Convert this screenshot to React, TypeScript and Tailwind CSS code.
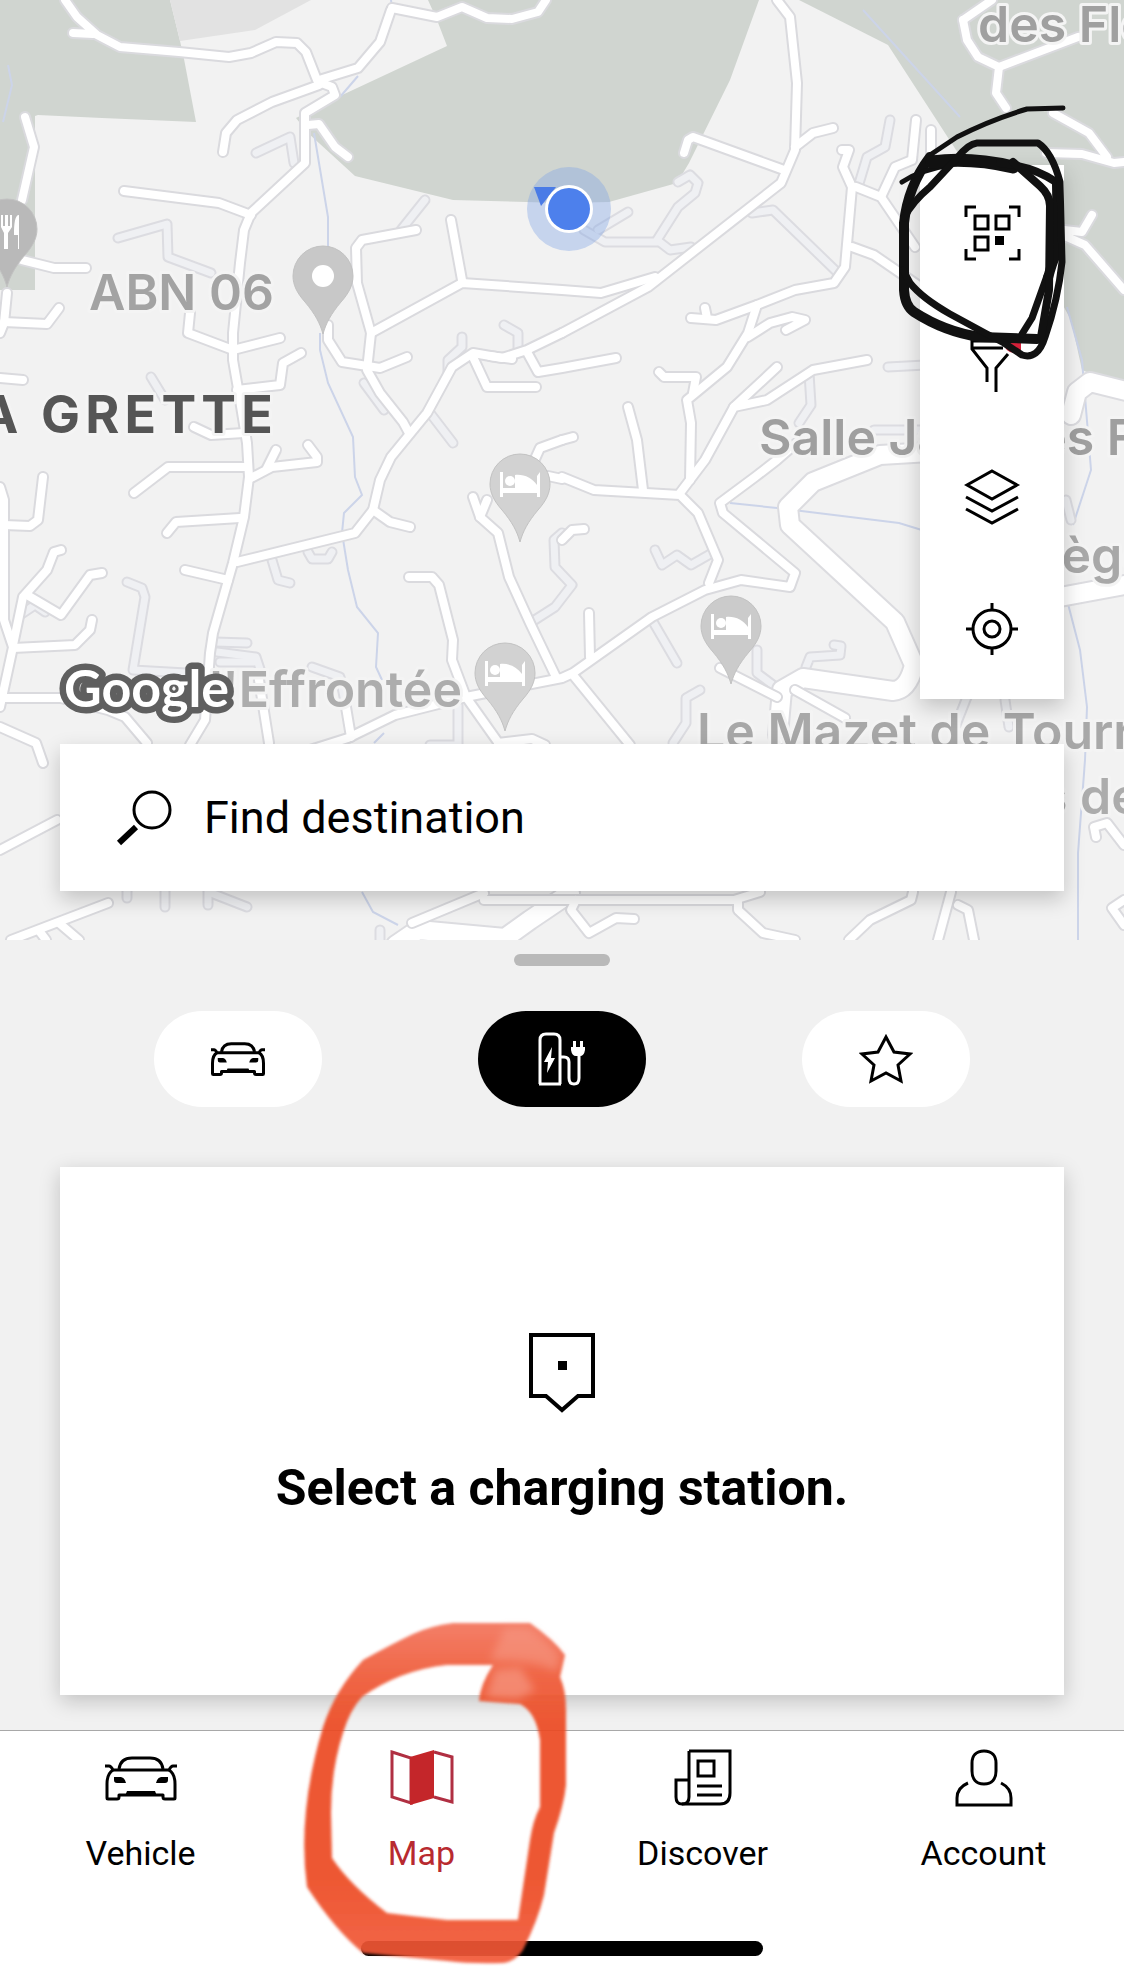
import type { ReactNode } from "react";

type RoadGroup = { width: number; casing: string; fill: string; paths: string[] };

const minorRoads: RoadGroup = {
  width: 7,
  casing: "#dcdce1",
  fill: "#eff0f3",
  paths: [
    "M256 153L290 137L294 163",
    "M118 238L167 224L168 257L211 273",
    "M151 377L165 400",
    "M425 200L401 230",
    "M504 325L518 333V348",
    "M462 337V347L448 360V372",
    "M430 413L453 443",
    "M364 383L384 410",
    "M272 560L278 580L290 583",
    "M308 552L312 559L328 559L332 552",
    "M127 582L142 588L145 597L133 670L186 673",
    "M215 642L247 643",
    "M217 652L256 657L262 675",
    "M220 662H254",
    "M312 667L340 677L346 707",
    "M678 182L690 175L698 183L695 193L678 207L657 240L670 250L691 247",
    "M584 230L605 242L657 242",
    "M598 230L628 212",
    "M752 213L773 210L838 273",
    "M858 187L867 157L885 147L890 120",
    "M809 373L811 405L799 423",
    "M888 367L925 365",
    "M874 430L920 430",
    "M655 550L662 565L677 555L691 565L712 553",
    "M652 620L677 663",
    "M700 690L686 698V723L673 743",
    "M562 533L554 540L555 567L572 585L555 607L530 623",
    "M757 650V673L777 688",
    "M806 667L810 657L840 655L841 646L834 645",
    "M956 725L967 697",
    "M1005 700L1009 727",
    "M127 890V898",
    "M165 890V907",
    "M208 890V905",
    "M211 893L247 907",
    "M380 945V930",
    "M458 705V745H430",
    "M1071 520L1066 500",
    "M20 615L35 605L45 612",
  ],
};

const mainRoads: RoadGroup = {
  width: 8,
  casing: "#dadade",
  fill: "#ffffff",
  paths: [
    "M65 0L77 17L97 35L120 47L179 52L229 57L251 53L276 42L297 43L306 52L317 80",
    "M73 33L93 34",
    "M392 8L437 17L462 7L487 18L512 19L538 12L546 0",
    "M391 10L380 42L358 68L319 80",
    "M319 85L272 102L237 120L226 133L223 152",
    "M319 82L332 87L335 95L305 113V163L251 213L244 230L240 263L233 333V360L240 400L247 443L249 477L244 517L233 563L213 633L210 653L205 720L190 745",
    "M308 125L319 124L335 147L348 157",
    "M124 191L219 203L251 215",
    "M25 117L34 147L22 200",
    "M22 260L54 268H86",
    "M7 293L4 323L0 333",
    "M4 322L47 324L59 308",
    "M190 313L188 333L233 350L280 338",
    "M237 390L280 385L283 363L301 353",
    "M0 378L23 380",
    "M194 427L211 435L244 433",
    "M416 230L362 240L356 248L357 283L371 333L367 370L380 393L403 422L409 433",
    "M371 333L462 283L562 290L601 293L655 277",
    "M451 220L462 280",
    "M328 325V340L342 362L380 368L407 357",
    "M562 333L527 350L502 358L473 353L452 367L427 413L391 457L380 480L373 510L355 533L237 562",
    "M473 357L487 387H536",
    "M490 356L512 359",
    "M527 352L538 372L562 368L616 358",
    "M562 440L540 448L530 470",
    "M548 476L562 479",
    "M134 493L168 467H247",
    "M251 478L272 467L317 462V457L308 445",
    "M267 468L276 450",
    "M0 487L4 500V620L13 647L0 707",
    "M4 525L30 526L38 520L43 477",
    "M13 645L23 597L47 570L54 552L61 550",
    "M27 595L61 615L90 575L102 573",
    "M13 648L75 645L90 630L92 620",
    "M167 533L176 522L240 518",
    "M185 570L228 580",
    "M259 680L269 743",
    "M373 510L390 522L410 527",
    "M409 577H432L439 585L453 640L452 660L466 697L500 745",
    "M473 497L480 517L498 533L509 577L530 623L556 677",
    "M487 500L480 517",
    "M310 750L348 738L395 715L466 697L562 678L573 673L652 617L705 590L741 580L790 587L795 573L723 513L720 503L755 477L777 460L800 440",
    "M346 707L351 737",
    "M0 727L36 743L43 763",
    "M0 850L57 820",
    "M0 698H61L108 710L125 717L147 743",
    "M11 940L108 903",
    "M59 923L79 940",
    "M40 932L46 940",
    "M412 923L484 893",
    "M498 743L532 739L545 745",
    "M562 477L594 490L680 495L698 513L718 560L709 583",
    "M628 407L637 440L643 490",
    "M680 493L705 460L734 407L767 400L813 370L867 360",
    "M734 407L777 367",
    "M690 480L691 423L687 400L727 367L748 333L757 305L795 290L834 283L845 267L852 187L843 167L849 150L842 150",
    "M659 372L664 377L696 377L693 393",
    "M562 440L573 437",
    "M757 305L716 320L691 318",
    "M705 308L707 318",
    "M748 337L770 323L792 317L805 320L786 330",
    "M777 0L790 17L797 83L795 150L781 183L648 287L562 333",
    "M684 153L688 140L693 137L784 170",
    "M795 147L813 133L833 128",
    "M852 247L874 255L906 277L925 290",
    "M856 187L881 197L915 247",
    "M881 197L895 167L912 160L916 120",
    "M931 130V157",
    "M720 668L777 697",
    "M795 690L845 718",
    "M589 613L590 657",
    "M573 675L630 745",
    "M562 540L572 530L584 529",
    "M963 20L967 40L978 57L999 67L996 93L1006 108",
    "M992 0L963 20",
    "M999 67L1078 37",
    "M1053 113L1089 133L1107 157",
    "M1046 153L1082 154L1114 163L1124 162",
    "M1064 230L1082 232L1092 215",
    "M1067 237L1085 245L1124 290",
    "M1096 837L1094 827L1107 823L1124 845",
    "M1124 900L1112 908L1124 925",
    "M484 900H734L760 892",
    "M576 900L571 910L589 933L616 918L634 919",
    "M738 900V910L763 933L795 940",
    "M913 892L911 900L870 920L849 940",
    "M951 892L938 940",
    "M958 905L968 910L974 940",
  ],
};

const arterials: RoadGroup = {
  width: 18,
  casing: "#dcdce0",
  fill: "#ffffff",
  paths: [
    "M930 452L880 455L813 482L788 507L790 525L895 622L914 665Q908 690 893 691L803 678L782 690L778 735",
    "M1071 415L1077 392L1090 382L1130 392",
    "M396 945L418 930L505 938L530 920L570 893",
    "M1060 597L1130 584",
  ],
};

const roadGroups = [minorRoads, arterials, mainRoads];

const streams = [
  "M391 0L392 8M358 76L340 97",
  "M314 133L328 217V250",
  "M320 333V350L328 383L353 437L355 477L362 495L344 513L342 533L348 570L357 607L378 633L376 667L382 680",
  "M384 733L374 743M362 892L373 912L398 925",
  "M730 503L777 508L899 523L925 531",
  "M863 10L960 117",
  "M1067 307L1082 360L1091 470L1073 525",
  "M1067 600L1080 650L1087 707L1085 760L1078 853V940",
  "M8 65L12 85L3 122",
];

type Label = { text: string; x: number; y: number; color: string; anchor?: "start" | "end" };

const labels: Label[] = [
  { text: "ABN 06", x: 89, y: 310, color: "#a3a3a3" },
  { text: "des Fleurs", x: 978, y: 42, color: "#a0a0a0" },
  { text: "Salle Jacques F", x: 759, y: 455, color: "#9f9f9f" },
  { text: "Collège", x: 968, y: 573, color: "#a8a8a8" },
  { text: "Le Mazet de Tourrettes", x: 697, y: 749, color: "#a8a8a8" },
  { text: "s de", x: 1040, y: 814, color: "#acacac" },
  { text: "l'Effrontée", x: 462, y: 707, color: "#adadad", anchor: "end" },
];

function Pin({ x, y, color, children }: { x: number; y: number; color: string; children: ReactNode }) {
  return (
    <g transform={`translate(${x} ${y})`}>
      <path
        d="M0 58C-3 47 -8 38 -18 26C-26 17 -30 9 -30 0A30 30 0 0 1 30 0C30 9 26 17 18 26C8 38 3 47 0 58Z"
        fill={color}
        stroke="#c2c2c2"
        strokeWidth="1"
      />
      {children}
    </g>
  );
}

function Bed() {
  return (
    <g fill="#fff">
      <path d="M-20 -12H-17V4H17V-8L20 -12V13H17V9H-17V13H-20Z" />
      <path d="M-5 4V-9C4 -10 12 -6 17 1V5H-5Z" />
      <circle cx="-10" cy="-3" r="5" />
    </g>
  );
}

function MapCanvas() {
  return (
    <svg
      className="absolute inset-0 h-full w-full"
      viewBox="0 0 1124 940"
      preserveAspectRatio="xMidYMid slice"
      aria-hidden="true"
    >
      <rect width="1124" height="940" fill="#f2f2f2" />
      <g fill="#d0d5d0">
        <path d="M0 0H170L180 41L184 59L196 122L102 118L38 115L35 116V290H0Z" />
        <path d="M428 0L437 20L447 46L340 96L296 118L308 133L355 176L453 200L562 203L609 202L677 183L689 163L730 80L759 0Z" />
        <path d="M799 0L888 45L956 150L1060 300L1071 320L1082 370L1124 387V0Z" />
      </g>
      <path d="M170 0L180 41L255 30L311 0Z" fill="#e2e2e2" />
      <g fill="none" stroke="#ccd4e9" strokeWidth="2">
        {streams.map((d) => (
          <path key={d} d={d} />
        ))}
      </g>
      {roadGroups.map((group) => (
        <g key={group.width + group.fill} fill="none" strokeLinecap="round" strokeLinejoin="round">
          {group.paths.map((d) => (
            <path key={d} d={d} stroke={group.casing} strokeWidth={group.width + 4} />
          ))}
          {group.paths.map((d) => (
            <path key={d} d={d} stroke={group.fill} strokeWidth={group.width} />
          ))}
        </g>
      ))}

      <Pin x={7} y={229} color="#b9b9b9">
        <path d="M-6 -14V-2L-3 4V20H1V4L5 -2V-14H3V-3H1V-14H-2V-3H-4V-14ZM11 20V6H7C7 -6 8 -14 12 -14V20Z" fill="#fff" />
      </Pin>
      <Pin x={323} y={276} color="#c8c8c8">
        <circle r="11" fill="#fff" />
      </Pin>
      <Pin x={520} y={484} color="#d2d2d2">
        <Bed />
      </Pin>
      <Pin x={505} y={673} color="#d2d2d2">
        <Bed />
      </Pin>
      <Pin x={731} y={626} color="#cbcbcb">
        <Bed />
      </Pin>

      <g fontFamily="Inter, 'Liberation Sans', sans-serif" stroke="#f4f4f4" strokeWidth="6" strokeLinejoin="round" paintOrder="stroke">
        {labels.map((l) => (
          <text key={l.text} x={l.x} y={l.y} fill={l.color} fontSize="50" fontWeight="600" textAnchor={l.anchor}>
            {l.text}
          </text>
        ))}
        <text className="tracking-widest" x="278" y="433" fill="#555" fontSize="52" fontWeight="700" textAnchor="end">
          LA GRETTE
        </text>
      </g>

      <circle cx="569" cy="209" r="42" fill="#7fa2e6" fillOpacity="0.38" />
      <path d="M534 187H556L541 206Z" fill="#4a7be6" />
      <circle cx="569" cy="209" r="24" fill="#fff" />
      <circle cx="569" cy="209" r="21" fill="#4d80ec" />

      <text
        x="64"
        y="707"
        fill="#fff"
        stroke="#5f5f5f"
        strokeWidth="13"
        strokeLinejoin="round"
        paintOrder="stroke"
        fontFamily="Lato, 'Liberation Sans', sans-serif"
        fontSize="52"
        fontWeight="700"
      >
        Google
      </text>
    </svg>
  );
}

function QrIcon() {
  return (
    <svg width="57" height="56" viewBox="0 0 57 56" fill="none" stroke="currentColor" strokeWidth="3">
      <path d="M2 12V2H12M45 2H55V12M55 44V54H45M12 54H2V44" />
      <path d="M11 11H24V24H11ZM32 11H45V24H32ZM11 32H24V45H11Z" />
      <path d="M31 31H40V40H31Z" fill="currentColor" stroke="none" />
    </svg>
  );
}

function FilterIcon() {
  return (
    <svg width="57" height="56" viewBox="0 0 57 56" fill="none" stroke="currentColor" strokeWidth="3">
      <path d="M7 4H42M7 11H39M8 3V12L23 31V45M44 17L32 31V55" />
      <circle cx="50" cy="6" r="10" fill="#d5213a" stroke="none" />
    </svg>
  );
}

function LayersIcon() {
  return (
    <svg width="57" height="58" viewBox="0 0 57 58" fill="none" stroke="currentColor" strokeWidth="3">
      <path d="M28 3L53 17L28 31L3 17Z" />
      <path d="M2 29L28 43L54 29M2 41L28 55L54 41" />
    </svg>
  );
}

function LocateIcon() {
  return (
    <svg width="54" height="54" viewBox="0 0 54 54" fill="none" stroke="currentColor" strokeWidth="3">
      <circle cx="27" cy="27" r="19" />
      <circle cx="27" cy="27" r="8" />
      <path d="M27 1V8M27 46V53M1 27H8M46 27H53" />
    </svg>
  );
}

function SearchIcon() {
  return (
    <svg width="56" height="56" viewBox="0 0 56 56" fill="none" stroke="currentColor" aria-hidden="true">
      <circle cx="36" cy="20" r="18" strokeWidth="3" />
      <path d="M20 37L3 53" strokeWidth="6" />
    </svg>
  );
}

function CarIcon({ className, strokeWidth }: { className: string; strokeWidth: number }) {
  return (
    <svg className={className} viewBox="0 0 72 45" fill="none" stroke="currentColor" strokeWidth={strokeWidth} strokeLinejoin="round">
      <path d="M14 13C15 6 19 2 27 2H45C53 2 57 6 58 13" />
      <path d="M0 10H4Q6 10 8 14H64Q66 10 68 10H72" />
      <path d="M8 14C3 17 2 22 2 28V42Q2 43 3 43H12Q14 43 14 41V39H58V41Q58 43 60 43H69Q70 43 70 42V28C70 22 69 17 64 14" />
      <path d="M9 21H16Q20 22 21 27H12Q9 27 9 24ZM63 21H56Q52 22 51 27H60Q63 27 63 24ZM22 35H50L52 40H20Z" fill="currentColor" stroke="none" />
    </svg>
  );
}

function ChargerIcon() {
  return (
    <svg width="48" height="54" viewBox="0 0 48 54" fill="none" stroke="currentColor" strokeWidth="3">
      <path d="M2 52V8Q2 2 8 2H16Q22 2 22 8V52" />
      <path d="M1 52H23" />
      <path d="M14 15L6 30H10L9 41L17 26H13Z" fill="currentColor" stroke="none" />
      <path d="M22 25H26Q31 25 31 30V46Q31 52 36 52Q41 52 41 46V22" />
      <path d="M33 15H35V9H38V15H42V9H45V15H47V18Q46 24 42 24H38Q34 24 33 18Z" fill="currentColor" stroke="none" />
    </svg>
  );
}

function StarIcon() {
  return (
    <svg width="54" height="52" viewBox="0 0 54 52" fill="none" stroke="currentColor" strokeWidth="3">
      <path d="M27 4L35 19L51 21L39 32L42 48L27 40L12 48L15 32L3 21L19 19Z" />
    </svg>
  );
}

function StationIcon() {
  return (
    <svg width="66" height="80" viewBox="0 0 66 80" fill="none" stroke="currentColor" strokeWidth="4" aria-hidden="true">
      <path d="M2 2H64V63H49L33 77L17 63H2Z" />
      <path d="M29 28H38V37H29Z" fill="currentColor" stroke="none" />
    </svg>
  );
}

function MapIcon() {
  return (
    <svg width="64" height="58" viewBox="0 0 64 58" fill="none" stroke="#b02f42" strokeWidth="3">
      <path d="M2 3L21 9V54L2 48ZM44 3L62 8V53L44 48" />
      <path d="M20 8L44 1V49L20 56Z" fill="#c4262a" stroke="none" />
    </svg>
  );
}

function NewsIcon() {
  return (
    <svg width="58" height="58" viewBox="0 0 58 58" fill="none" stroke="currentColor" strokeWidth="3">
      <path d="M15 2H56V44Q56 55 46 55H8Q2 55 2 48V31H15" />
      <path d="M15 2V48Q15 55 8 55" />
      <path d="M24 12H40V27H24ZM23 37H48M23 46H48" />
    </svg>
  );
}

function AccountIcon() {
  return (
    <svg width="58" height="58" viewBox="0 0 58 58" fill="none" stroke="currentColor" strokeWidth="3">
      <path d="M29 2C37 2 41 7 41 14V22C41 30 37 35 29 35S17 30 17 22V14C17 7 21 2 29 2Z" />
      <path d="M13 34C6 37 2 42 2 49V56H56V49C56 42 52 37 46 34" />
    </svg>
  );
}

const tools = [
  { label: "Scan code", icon: <QrIcon /> },
  { label: "Filter", icon: <FilterIcon /> },
  { label: "Map layers", icon: <LayersIcon /> },
  { label: "My location", icon: <LocateIcon /> },
];

const categories = [
  { label: "My vehicle", icon: <CarIcon className="h-[34px] w-[54px]" strokeWidth={4} />, active: false },
  { label: "Charging stations", icon: <ChargerIcon />, active: true },
  { label: "Favourites", icon: <StarIcon />, active: false },
];

const navItems = [
  { label: "Vehicle", icon: <CarIcon className="h-[45px] w-[72px]" strokeWidth={3} />, active: false },
  { label: "Map", icon: <MapIcon />, active: true },
  { label: "Discover", icon: <NewsIcon />, active: false },
  { label: "Account", icon: <AccountIcon />, active: false },
];

// Hand-drawn marks that sit above the whole screen
function Markup() {
  return (
    <svg className="pointer-events-none absolute inset-0 h-full w-full" viewBox="0 0 1124 1980" aria-hidden="true">
      <defs>
        <linearGradient id="marker" x1="0" y1="0" x2="0" y2="1">
          <stop offset="0" stopColor="#f3745b" />
          <stop offset="0.15" stopColor="#ef5a38" />
          <stop offset="0.3" stopColor="#ec4a22" />
          <stop offset="0.75" stopColor="#ec4a22" />
          <stop offset="1" stopColor="#f2593a" />
        </linearGradient>
        <filter id="soft">
          <feGaussianBlur stdDeviation="1.5" />
        </filter>
        <filter id="softer" x="-20%" y="-20%" width="140%" height="140%">
          <feGaussianBlur stdDeviation="4" />
        </filter>
      </defs>
      <g fill="none" stroke="#111" strokeLinecap="round" strokeLinejoin="round">
        <path strokeWidth="5" d="M1063 108L1027 109Q990 120 957 137L930 155L918 173" />
        <path strokeWidth="10" d="M930 157Q908 186 904 223V290Q905 306 914 312Q945 332 980 337L1037 339" />
        <path strokeWidth="5" d="M902 182Q920 170 950 165" />
        <path strokeWidth="13" d="M932 162Q970 157 1013 167" />
        <path strokeWidth="8" d="M1000 163Q1035 167 1056 182" />
        <path strokeWidth="10" d="M1057 184L1058 250Q1052 262 1048 278" />
        <path strokeWidth="7" d="M1047 276L1032 318L1022 334" />
        <path strokeWidth="7" d="M904 218Q912 202 930 187L957 158Q968 144 977 143H1038Q1052 152 1060 182L1062 262Q1058 300 1045 337Q1038 360 1022 355L1004 343L985 333L950 314Q922 298 910 283L903 270" />
        <path strokeWidth="8" d="M1013 162L1040 186Q1050 195 1050 206L1049 290L1041 337" />
      </g>
      <g filter="url(#soft)" opacity="0.92">
        <path
          fill="url(#marker)"
          fillRule="evenodd"
          d="M453 1623H530Q554 1640 565 1655L560 1677Q566 1690 566 1710V1785Q564 1805 554 1833L544 1895Q538 1920 523 1950Q515 1962 503 1963Q470 1964 447 1961L363 1953Q335 1930 307 1887Q302 1850 306 1810Q310 1770 323 1727Q335 1690 363 1660Q390 1645 413 1634Q430 1626 453 1623ZM447 1665Q400 1670 362 1697Q350 1710 343 1733Q331 1770 331 1813L332 1858Q350 1885 387 1913Q410 1916 447 1920H518L530 1840Q533 1820 540 1807V1740Q536 1712 520 1704L479 1701Q480 1685 493 1665Z"
        />
      </g>
      <g filter="url(#softer)" fill="#f7a08e">
        <path fillOpacity="0.6" d="M495 1670L520 1668L535 1690L518 1699L486 1697Z" />
        <path fillOpacity="0.5" d="M505 1628H528Q550 1642 560 1656L556 1672Q540 1660 490 1660Z" />
      </g>
    </svg>
  );
}

export default function App() {
  return (
    <div className="relative flex min-h-screen flex-col bg-[#f1f1f1] font-['Roboto','Liberation_Sans',sans-serif] text-black">
      <section className="relative flex flex-col overflow-hidden px-[60px] pt-[165px] pb-[49px]">
        <MapCanvas />
        <div className="relative flex w-36 flex-col self-end bg-white pt-[2px] pb-1 shadow-[0_8px_20px_rgba(0,0,0,0.2)]">
          {tools.map((tool) => (
            <button key={tool.label} aria-label={tool.label} className="flex h-[132px] items-center justify-center">
              {tool.icon}
            </button>
          ))}
        </div>
        <label className="relative mt-[45px] flex h-[147px] items-center gap-8 bg-white px-14 shadow-[0_8px_20px_rgba(0,0,0,0.2)]">
          <SearchIcon />
          <input
            type="text"
            aria-label="Find destination"
            placeholder="Find destination"
            className="min-w-0 flex-1 bg-transparent text-[45px] outline-none placeholder:text-black"
          />
        </label>
      </section>

      <main className="flex flex-1 flex-col px-[60px] pt-[14px] pb-[35px]">
        <div className="h-3 w-24 self-center rounded-full bg-[#b9b9b9]" />
        <div className="mt-[45px] flex justify-center gap-[156px]">
          {categories.map((c) => (
            <button
              key={c.label}
              aria-label={c.label}
              aria-pressed={c.active}
              className={`flex h-24 w-[168px] items-center justify-center rounded-full ${c.active ? "bg-black text-white" : "bg-white"}`}
            >
              {c.icon}
            </button>
          ))}
        </div>
        <div className="mt-[60px] flex min-h-[528px] flex-col items-center gap-[45px] bg-white pt-[166px] shadow-[0_6px_20px_rgba(0,0,0,0.2)]">
          <StationIcon />
          <h1 className="text-[50px] leading-[60px] font-bold">Select a charging station.</h1>
        </div>
      </main>

      <footer className="flex flex-col items-center border-t border-[#a8a8a8] bg-white pb-6">
        <nav className="grid w-full grid-cols-4 pt-[18px]">
          {navItems.map((item) => (
            <a
              key={item.label}
              href="#"
              aria-current={item.active ? "page" : undefined}
              className={`flex flex-col items-center gap-[22px] ${item.active ? "text-[#b82a30]" : "text-black"}`}
            >
              <span className="flex h-[58px] items-center">{item.icon}</span>
              <span className="text-[34px] leading-[48px]">{item.label}</span>
            </a>
          ))}
        </nav>
        <div className="mt-16 h-[15px] w-[402px] rounded-full bg-black" />
      </footer>

      <Markup />
    </div>
  );
}
